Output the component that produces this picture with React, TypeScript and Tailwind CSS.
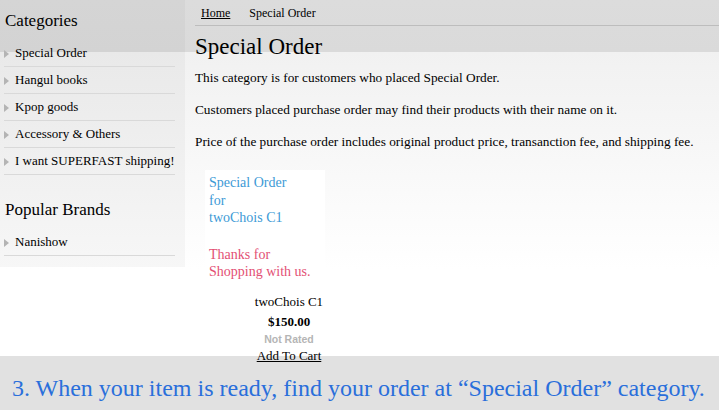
const categories = [
  "Special Order",
  "Hangul books",
  "Kpop goods",
  "Accessory & Others",
  "I want SUPERFAST shipping!",
];

const brands = ["Nanishow"];

const NavItem = ({ label }: { label: string }) => (
  <li className="flex h-[27px] items-center border-b border-[#d9d9d9]">
    <span className="mt-px mr-[6px] h-0 w-0 border-y-[4px] border-l-[5px] border-y-transparent border-l-[#b4b4b4]" />
    <span>{label}</span>
  </li>
);

const Sidebar = () => (
  <aside className="w-[185px] shrink-0 self-start bg-black/[0.03] pb-[11px] pl-[4px]">
    <h2 className="mt-[11px] mb-[9px] pl-px text-[17px] leading-[20px]">Categories</h2>
    <ul className="mr-[10px] text-[13px]">
      {categories.map((c) => (
        <NavItem key={c} label={c} />
      ))}
    </ul>
    <h2 className="mt-[25px] mb-[9px] pl-px text-[17px] leading-[20px]">Popular Brands</h2>
    <ul className="mr-[10px] text-[13px]">
      {brands.map((b) => (
        <NavItem key={b} label={b} />
      ))}
    </ul>
  </aside>
);

const ProductCard = () => (
  <div className="relative z-10 mt-[20px] ml-[10px] flex w-[168px] flex-col">
    <div className="h-[115px] w-[120px] bg-white pt-[4px] pl-[4px] text-[14px] leading-[17.5px]">
      <p className="text-[#3d9ad6]">
        Special Order
        <br />
        for
        <br />
        twoChois C1
      </p>
      <p className="mt-[19px] text-[#e34f74]">
        Thanks for
        <br />
        Shopping with us.
      </p>
    </div>
    <div className="mt-[9px] flex flex-col items-center text-[13px] leading-[16px]">
      <span>twoChois C1</span>
      <span className="mt-[4px] font-bold">$150.00</span>
      <span className="mt-[3px] font-['Liberation_Sans',sans-serif] text-[10.5px] leading-[12px] font-bold text-[#b5b5b5]">
        Not Rated
      </span>
      <a className="mt-[3px] underline">Add To Cart</a>
    </div>
  </div>
);

export default function App() {
  return (
    <div className="flex h-[410px] w-[719px] flex-col overflow-hidden font-['Liberation_Serif',serif] text-black">
      <div className="relative z-10 flex h-[356px] shrink-0 bg-[linear-gradient(#dcdcdc_0,#dadada_52px,#f1f1f1_52px,#ffffff_270px)]">
        <Sidebar />
        <main className="flex-1 pl-[10px]">
          <nav className="flex h-[26px] items-center gap-[19px] border-b border-[#bdbdbd] pl-[6px] text-[12px]">
            <a className="underline">Home</a>
            <span>Special Order</span>
          </nav>
          <h1 className="mt-[7px] text-[23px] leading-[28px]">Special Order</h1>
          <div className="mt-[9px] flex flex-col gap-[16px] text-[13.3px] leading-[16px]">
            <p>This category is for customers who placed Special Order.</p>
            <p>Customers placed purchase order may find their products with their name on it.</p>
            <p>Price of the purchase order includes original product price, transanction fee, and shipping fee.</p>
          </div>
          <ProductCard />
        </main>
      </div>
      <div className="h-[54px] shrink-0 bg-[#e1e1e1] pt-[17px] pl-[12px] text-[24px] leading-[30px] whitespace-nowrap text-[#2a6fdb]">
        3. When your item is ready, find your order at “Special Order” category.
      </div>
    </div>
  );
}
